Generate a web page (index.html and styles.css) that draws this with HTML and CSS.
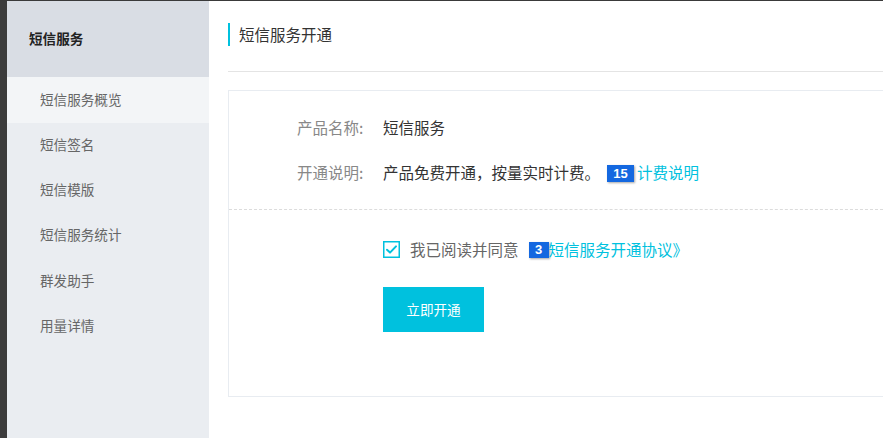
FILE: index.html
```html
<!DOCTYPE html>
<html lang="zh-CN">
<head>
<meta charset="utf-8">
<title>短信服务开通</title>
<link rel="stylesheet" href="styles.css">
</head>
<body>
<div class="frame">
  <div class="edge"></div>
  <aside class="sidebar">
    <div class="side-head">短信服务</div>
    <ul class="side-menu">
      <li class="side-item active">短信服务概览</li>
      <li class="side-item">短信签名</li>
      <li class="side-item">短信模版</li>
      <li class="side-item">短信服务统计</li>
      <li class="side-item">群发助手</li>
      <li class="side-item">用量详情</li>
    </ul>
  </aside>
  <main class="main">
    <div class="page-head">
      <h1 class="page-title">短信服务开通</h1>
    </div>
    <section class="card">
      <div class="info">
        <div class="row">
          <span class="label">产品名称:</span>
          <span class="value">短信服务</span>
        </div>
        <div class="row">
          <span class="label">开通说明:</span>
          <span class="value">产品免费开通，按量实时计费。</span>
          <span class="badge badge-wide">15</span>
          <a class="link link-fee">计费说明</a>
        </div>
      </div>
      <div class="action">
        <label class="agree">
          <svg class="check" width="17" height="17" viewBox="0 0 17 17">
            <rect x="0.75" y="0.75" width="15.5" height="15.5" fill="#fff" stroke="#00c1de" stroke-width="1.5"/>
            <polyline points="4,8.8 7,11.6 13,5.4" fill="none" stroke="#00c1de" stroke-width="2" stroke-linecap="round" stroke-linejoin="round"/>
          </svg>
          <span class="agree-text">我已阅读并同意</span>
          <span class="badge badge-small">3</span>
          <a class="link link-protocol">短信服务开通协议》</a>
        </label>
        <button class="btn">立即开通</button>
      </div>
    </section>
  </main>
</div>
</body>
</html>
```

FILE: styles.css
```css
* { box-sizing: border-box; }
html, body { margin: 0; padding: 0; height: 100%; }
body {
  font-family: "Noto Sans CJK SC", "Noto Sans", "Liberation Sans", sans-serif;
  background: #fff;
  overflow: hidden;
}
.frame {
  display: flex;
  height: 100%;
  border-top: 1px solid #3a3a3a;
}
.edge {
  width: 7px;
  flex: none;
  background: #3c3c3c;
}
.sidebar {
  width: 202px;
  flex: none;
  background: #eaedf1;
}
.side-head {
  height: 76px;
  background: #d9dde4;
  padding-left: 22px;
  padding-bottom: 3px;
  display: flex;
  align-items: center;
  font-size: 13.6px;
  font-weight: 700;
  color: #222;
}
.side-menu {
  list-style: none;
  margin: 0;
  padding: 0;
}
.side-item {
  height: 45.2px;
  display: flex;
  align-items: center;
  padding-left: 33px;
  padding-bottom: 3px;
  font-size: 13.6px;
  color: #666;
}
.side-item.active {
  background: #f3f5f7;
  height: 46px;
}
.main {
  flex: 1;
  min-width: 0;
  padding-left: 19px;
}
.page-head {
  height: 71px;
  border-bottom: 1px solid #e4e4e4;
  display: flex;
  align-items: center;
}
.page-title {
  margin: -3px 0 0 0;
  font-size: 15.5px;
  font-weight: 400;
  color: #333;
  border-left: 2px solid #00c1de;
  padding-left: 9px;
  line-height: 23px;
}
.card {
  margin-top: 18px;
  border: 1px solid #e8ecf1;
  border-right: none;
}
.info {
  padding: 24px 0 25px 68px;
  border-bottom: 1px dashed #dcdcdc;
}
.row {
  display: flex;
  align-items: center;
  height: 24px;
  font-size: 15.5px;
  white-space: nowrap;
}
.row + .row { margin-top: 21px; }
.label {
  width: 86px;
  flex: none;
  color: #888;
}
.value { color: #333; }
.link {
  color: #00c1de;
  text-decoration: none;
}
.badge {
  flex: none;
  background: #1468e0;
  color: #fff;
  font-family: "Liberation Sans", Arial, sans-serif;
  font-weight: 700;
  display: flex;
  align-items: center;
  justify-content: center;
  box-shadow: 1px 1px 2px rgba(0,0,0,0.35);
  font-size: 13px;
}
.badge-wide {
  width: 27px;
  height: 17px;
  margin-left: 7px;
  margin-top: 2px;
}
.link-fee { margin-left: 3px; }
.badge-small {
  width: 20px;
  height: 16px;
  margin-left: 10px;
  margin-top: 1px;
}
.action {
  padding: 27px 0 64px 154px;
}
.agree {
  display: flex;
  align-items: center;
  height: 24px;
  font-size: 15.5px;
  white-space: nowrap;
}
.check { flex: none; margin-right: 10px; }
.agree-text { color: #666; }
.btn {
  display: block;
  margin-top: 26px;
  width: 101px;
  height: 45px;
  border: none;
  background: #00c1de;
  color: #fff;
  font-family: "Noto Sans CJK SC", sans-serif;
  font-size: 13.6px;
  padding: 0 0 2px 0;
}
```
